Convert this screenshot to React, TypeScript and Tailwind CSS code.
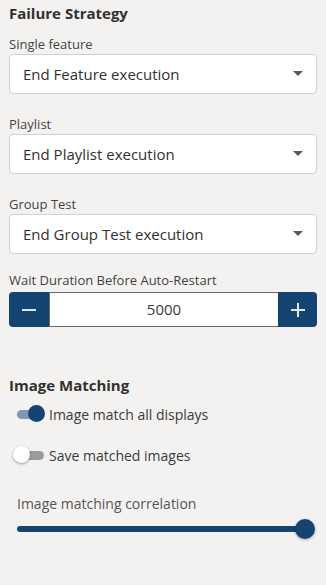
import { useState } from 'react'

const selects = [
  { label: 'Single feature', value: 'End Feature execution' },
  { label: 'Playlist', value: 'End Playlist execution' },
  { label: 'Group Test', value: 'End Group Test execution' },
]

function Caret() {
  return (
    <svg width="10" height="6" viewBox="0 0 10 6" className="shrink-0">
      <path d="M0 0 L10 0 L5 5 Z" fill="#5a5a5a" />
    </svg>
  )
}

function Toggle({ on, label }: { on: boolean; label: string }) {
  return (
    <div className="flex items-center h-[20px]">
      <div className="relative w-[32px] h-[20px] ml-[7px] mr-[1px]">
        <div
          className={`absolute top-[6px] left-[1px] w-[27px] h-[9px] rounded-full ${on ? 'bg-[#7d98b6]' : 'bg-[#9b9b9b]'}`}
        />
        <div
          className={`absolute top-[1px] w-[17px] h-[17px] rounded-full ${
            on ? 'left-[12px] bg-[#134472]' : 'left-[-3px] bg-white shadow-[0_1px_3px_rgba(0,0,0,0.35)]'
          }`}
        />
      </div>
      <span className="text-[14px] text-[#3b3b3b]">{label}</span>
    </div>
  )
}

export default function App() {
  const [wait] = useState(5000)

  return (
    <div className="w-[326px] h-[585px] bg-[#f3f2f1] px-[9px] pt-[3px] text-[#323130]" style={{ fontFamily: '"Open Sans", "Noto Sans", sans-serif' }}>
      <h2 className="text-[15px] font-bold text-[#323130] leading-[20px]">Failure Strategy</h2>

      <div className="mt-[13px] flex flex-col gap-[22px]">
        {selects.map((s) => (
          <div key={s.label}>
            <div className="text-[13px] text-[#444] leading-[17px] mb-[1px]">{s.label}</div>
            <div className="h-[40px] bg-white border border-[#d0d0d0] rounded-[4px] flex items-center justify-between pl-[13px] pr-[13px]">
              <span className="text-[15px] text-[#323130]">{s.value}</span>
              <Caret />
            </div>
          </div>
        ))}
      </div>

      <div className="mt-[18px]">
        <div className="text-[13px] font-medium text-[#3f3f3f] leading-[17px] mb-[3px]">Wait Duration Before Auto-Restart</div>
        <div className="flex h-[35px]">
          <button className="w-[40px] bg-[#134472] rounded-l-[4px] flex items-center justify-center">
            <svg width="14" height="2" viewBox="0 0 14 2">
              <rect width="14" height="2" fill="#dfe6ee" />
            </svg>
          </button>
          <div className="flex-1 bg-white border-y border-l border-[#6a6a6a] flex items-center justify-center text-[15px] text-[#3b3b3b]">
            {wait}
          </div>
          <button className="w-[39px] bg-[#134472] rounded-r-[4px] flex items-center justify-center">
            <svg width="14" height="14" viewBox="0 0 14 14">
              <rect x="0" y="6" width="14" height="2" fill="#dfe6ee" />
              <rect x="6" y="0" width="2" height="14" fill="#dfe6ee" />
            </svg>
          </button>
        </div>
      </div>

      <h2 className="mt-[48px] text-[15px] font-bold text-[#323130] leading-[20px]">Image Matching</h2>

      <div className="mt-[9px] flex flex-col gap-[21px]">
        <Toggle on label="Image match all displays" />
        <Toggle on={false} label="Save matched images" />
      </div>

      <div className="mt-[30px] ml-[8px] mr-[12px]">
        <div className="text-[14px] text-[#555] leading-[18px]">Image matching correlation</div>
        <div className="relative h-[22px] mt-[5px] flex items-center">
          <div className="w-full h-[6px] rounded-full bg-[#134472]" />
          <div className="absolute right-[-10px] w-[20px] h-[20px] rounded-full bg-[#134472] shadow-[0_1px_3px_rgba(0,0,0,0.3)]" />
        </div>
      </div>
    </div>
  )
}
